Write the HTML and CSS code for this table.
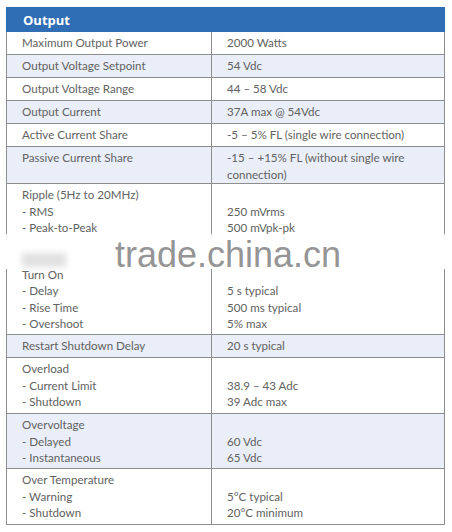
FILE: index.html
```html
<!DOCTYPE html>
<html>
<head>
<meta charset="utf-8">
<link rel="stylesheet" href="styles.css">
</head>
<body>
<div class="page">
  <table class="spec">
    <colgroup>
      <col class="col-name">
      <col class="col-value">
    </colgroup>
    <thead>
      <tr><th colspan="2">Output</th></tr>
    </thead>
    <tbody>
      <tr class="r1"><td>Maximum Output Power</td><td>2000 Watts</td></tr>
      <tr class="r1 shade"><td>Output Voltage Setpoint</td><td>54 Vdc</td></tr>
      <tr class="r1"><td>Output Voltage Range</td><td>44 – 58 Vdc</td></tr>
      <tr class="r1 shade"><td>Output Current</td><td>37A max @ 54Vdc</td></tr>
      <tr class="r1"><td>Active Current Share</td><td>-5 – 5% FL (single wire connection)</td></tr>
      <tr class="r2 shade"><td>Passive Current Share</td><td>-15 – +15% FL (without single wire connection)</td></tr>
      <tr class="r-ripple"><td>Ripple (5Hz to 20MHz)<br>- RMS<br>- Peak-to-Peak</td><td><br>250 mVrms<br>500 mVpk-pk</td></tr>
      <tr class="r-turn"><td>Turn On<br>- Delay<br>- Rise Time<br>- Overshoot</td><td><br>5 s typical<br>500 ms typical<br>5% max</td></tr>
      <tr class="r1 shade"><td>Restart Shutdown Delay</td><td>20 s typical</td></tr>
      <tr class="r3"><td>Overload<br>- Current Limit<br>- Shutdown</td><td><br>38.9 – 43 Adc<br>39 Adc max</td></tr>
      <tr class="r3b shade"><td>Overvoltage<br>- Delayed<br>- Instantaneous</td><td><br>60 Vdc<br>65 Vdc</td></tr>
      <tr class="r3"><td>Over Temperature<br>- Warning<br>- Shutdown</td><td><br>5°C typical<br>20°C minimum</td></tr>
    </tbody>
  </table>
  <div class="band"></div>
  <div class="smudge"></div>
  <div class="watermark">trade.china.cn</div>
</div>
</body>
</html>
```

FILE: styles.css
```css
html, body {
  margin: 0;
  padding: 0;
  background: #ffffff;
}
.page {
  position: relative;
  width: 452px;
  height: 532px;
  padding: 7px 0 0 6px;
  box-sizing: border-box;
}
.spec {
  border-collapse: collapse;
  width: 438px;
  table-layout: fixed;
  font-family: Lato, "Open Sans", sans-serif;
  font-size: 11.6px;
  color: #626262;
}
.col-name { width: 205px; }
.col-value { width: 233px; }
.spec th {
  background: #2f6db5;
  color: #ffffff;
  font-family: "Open Sans", Lato, sans-serif;
  font-weight: 700;
  font-size: 13px;
  text-align: left;
  height: 24px;
  padding: 0 0 0 16px;
  box-sizing: border-box;
  border: 1px solid #2f6db5;
}
.spec td {
  border: 1px solid #8e8e8e;
  vertical-align: top;
  padding: 3px 6px 0 15px;
  line-height: 16.5px;
  box-sizing: border-box;
}
.shade td {
  background: #e9eef8;
}
.r1 td { height: 23px; }
.r2 td { height: 37px; }
.r-ripple td { height: 81px; }
.r-turn td { height: 70px; padding-top: 2px; line-height: 16.3px; }
.r3 td { height: 56px; }
.r3b td { height: 55px; }
.band {
  position: absolute;
  left: 0;
  top: 234px;
  width: 452px;
  height: 35px;
  background: linear-gradient(to bottom, rgba(255,255,255,0.7), #ffffff 15%, #ffffff 100%);
}
.smudge {
  position: absolute;
  left: 22px;
  top: 253px;
  width: 44px;
  height: 14px;
  background: #d8d8d8;
  filter: blur(3px);
  opacity: 0.8;
}
.watermark {
  position: absolute;
  left: 115px;
  top: 237px;
  font-family: "Liberation Sans", Arial, sans-serif;
  font-size: 36px;
  line-height: 36px;
  color: #959595;
  white-space: nowrap;
}
```
